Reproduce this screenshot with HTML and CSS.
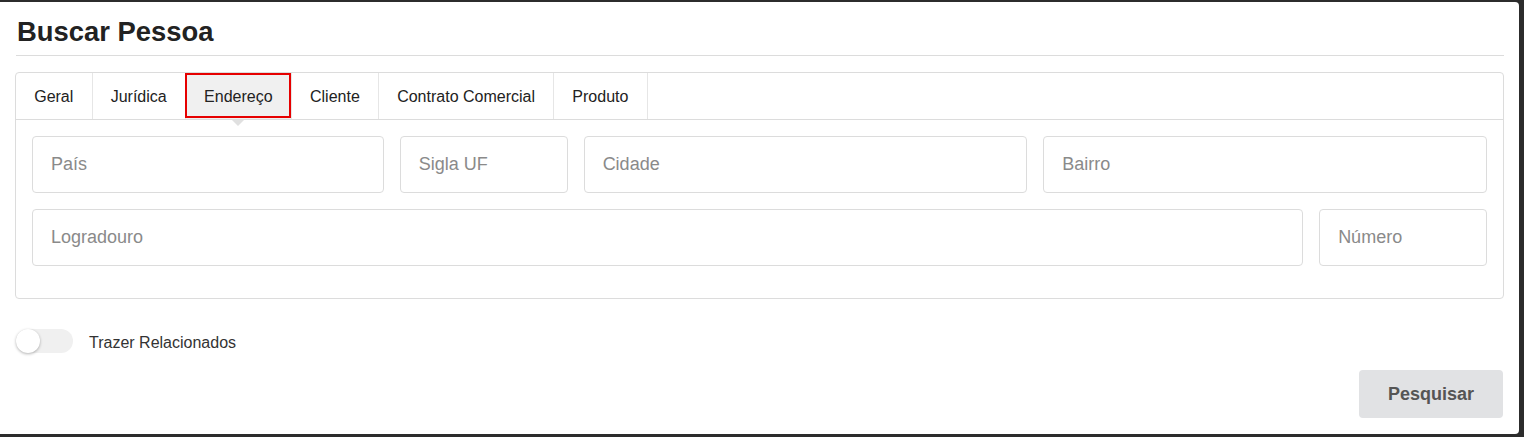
FILE: index.html
```html
<!DOCTYPE html>
<html lang="pt-BR">
<head>
<meta charset="utf-8">
<title>Buscar Pessoa</title>
<link rel="stylesheet" href="styles.css">
</head>
<body>
<div class="panel">
  <h1 class="title">Buscar Pessoa</h1>
  <hr class="divider">
  <div class="tabs">
    <ul class="tab-bar">
      <li class="tab">Geral</li>
      <li class="tab">Jurídica</li>
      <li class="tab active">Endereço</li>
      <li class="tab">Cliente</li>
      <li class="tab">Contrato Comercial</li>
      <li class="tab">Produto</li>
    </ul>
    <div class="tab-content">
      <div class="row">
        <div class="col w6"><input class="field" placeholder="País"></div>
        <div class="col w3"><input class="field" placeholder="Sigla UF"></div>
        <div class="col w75"><input class="field" placeholder="Cidade"></div>
        <div class="col w75"><input class="field" placeholder="Bairro"></div>
      </div>
      <div class="row">
        <div class="col w21"><input class="field" placeholder="Logradouro"></div>
        <div class="col w3"><input class="field" placeholder="Número"></div>
      </div>
    </div>
  </div>
  <div class="toggle-row">
    <span class="switch"><span class="knob"></span></span>
    <span class="toggle-label">Trazer Relacionados</span>
  </div>
  <div class="actions">
    <button class="btn">Pesquisar</button>
  </div>
</div>
</body>
</html>
```
FILE: styles.css
```css
* { box-sizing: border-box; }
html, body { margin: 0; padding: 0; }
body {
  background: #2c2c2c;
  font-family: "Liberation Sans", Arial, sans-serif;
  height: 437px;
  overflow: hidden;
}
.panel {
  background: #fff;
  margin: 2px 5px 0 0;
  height: 432px;
  border-radius: 0 4px 4px 0;
  padding: 0 15px;
}
.title {
  margin: 0;
  padding-top: 15px;
  font-size: 27.4px;
  line-height: 30px;
  font-weight: bold;
  color: #222;
  padding-left: 2px;
}
.divider {
  border: 0;
  border-top: 1px solid #dcdcdc;
  margin: 8px 0 0 1px;
  height: 0;
}
.tabs {
  margin-top: 16px;
  border: 1px solid #dcdcdc;
  border-radius: 4px;
}
.tab-bar {
  list-style: none;
  margin: 0;
  padding: 0;
  display: flex;
  height: 47px;
  border-bottom: 1px solid #dcdcdc;
}
.tab {
  position: relative;
  padding: 1px 18.2px 0;
  font-size: 16px;
  color: #222;
  line-height: 45px;
  border-right: 1px solid #e6e6e6;
}
.tab.active {
  background: #f0f0f0;
}
.tab.active::before {
  content: "";
  position: absolute;
  top: 0;
  left: -1px;
  right: 0;
  bottom: 1px;
  border: 2px solid #e60000;
}
.tab.active::after {
  content: "";
  position: absolute;
  left: 50%;
  margin-left: -6px;
  bottom: -7px;
  width: 0;
  height: 0;
  border-left: 6px solid transparent;
  border-right: 6px solid transparent;
  border-top: 6px solid #e0e0e0;
}
.tab-content {
  padding: 16px 16px 16px;
}
.row {
  display: flex;
  margin: 0 -8px 16px;
}
.col { padding: 0 8px; }
.w6 { width: 25%; }
.w3 { width: 12.5%; }
.w75 { width: 31.25%; }
.w21 { width: 87.5%; }
.field {
  display: block;
  width: 100%;
  height: 57px;
  border: 1px solid #dcdcdc;
  border-radius: 4px;
  padding: 0 18px;
  font-family: "Liberation Sans", Arial, sans-serif;
  font-size: 18px;
  color: #333;
  background: #fff;
  outline: none;
}
.field::placeholder { color: #8a8a8a; }
.toggle-row {
  display: flex;
  align-items: center;
  margin-top: 30px;
  margin-left: 1px;
  height: 24px;
}
.switch {
  position: relative;
  display: block;
  width: 57px;
  height: 24px;
  border-radius: 12px;
  background: #f0f0f0;
}
.knob {
  position: absolute;
  left: 0;
  top: 0;
  width: 24px;
  height: 24px;
  border-radius: 50%;
  background: #fff;
  box-shadow: 0 1px 3px rgba(0,0,0,0.3);
}
.toggle-label {
  margin-left: 16px;
  padding-top: 3px;
  font-size: 16px;
  color: #333;
}
.actions {
  display: flex;
  justify-content: flex-end;
  margin-top: 17px;
  padding-right: 1px;
}
.btn {
  width: 144px;
  height: 48px;
  border: 0;
  border-radius: 4px;
  background: #e1e2e4;
  color: #555;
  font-family: "Liberation Sans", Arial, sans-serif;
  font-size: 18px;
  font-weight: bold;
}
```
